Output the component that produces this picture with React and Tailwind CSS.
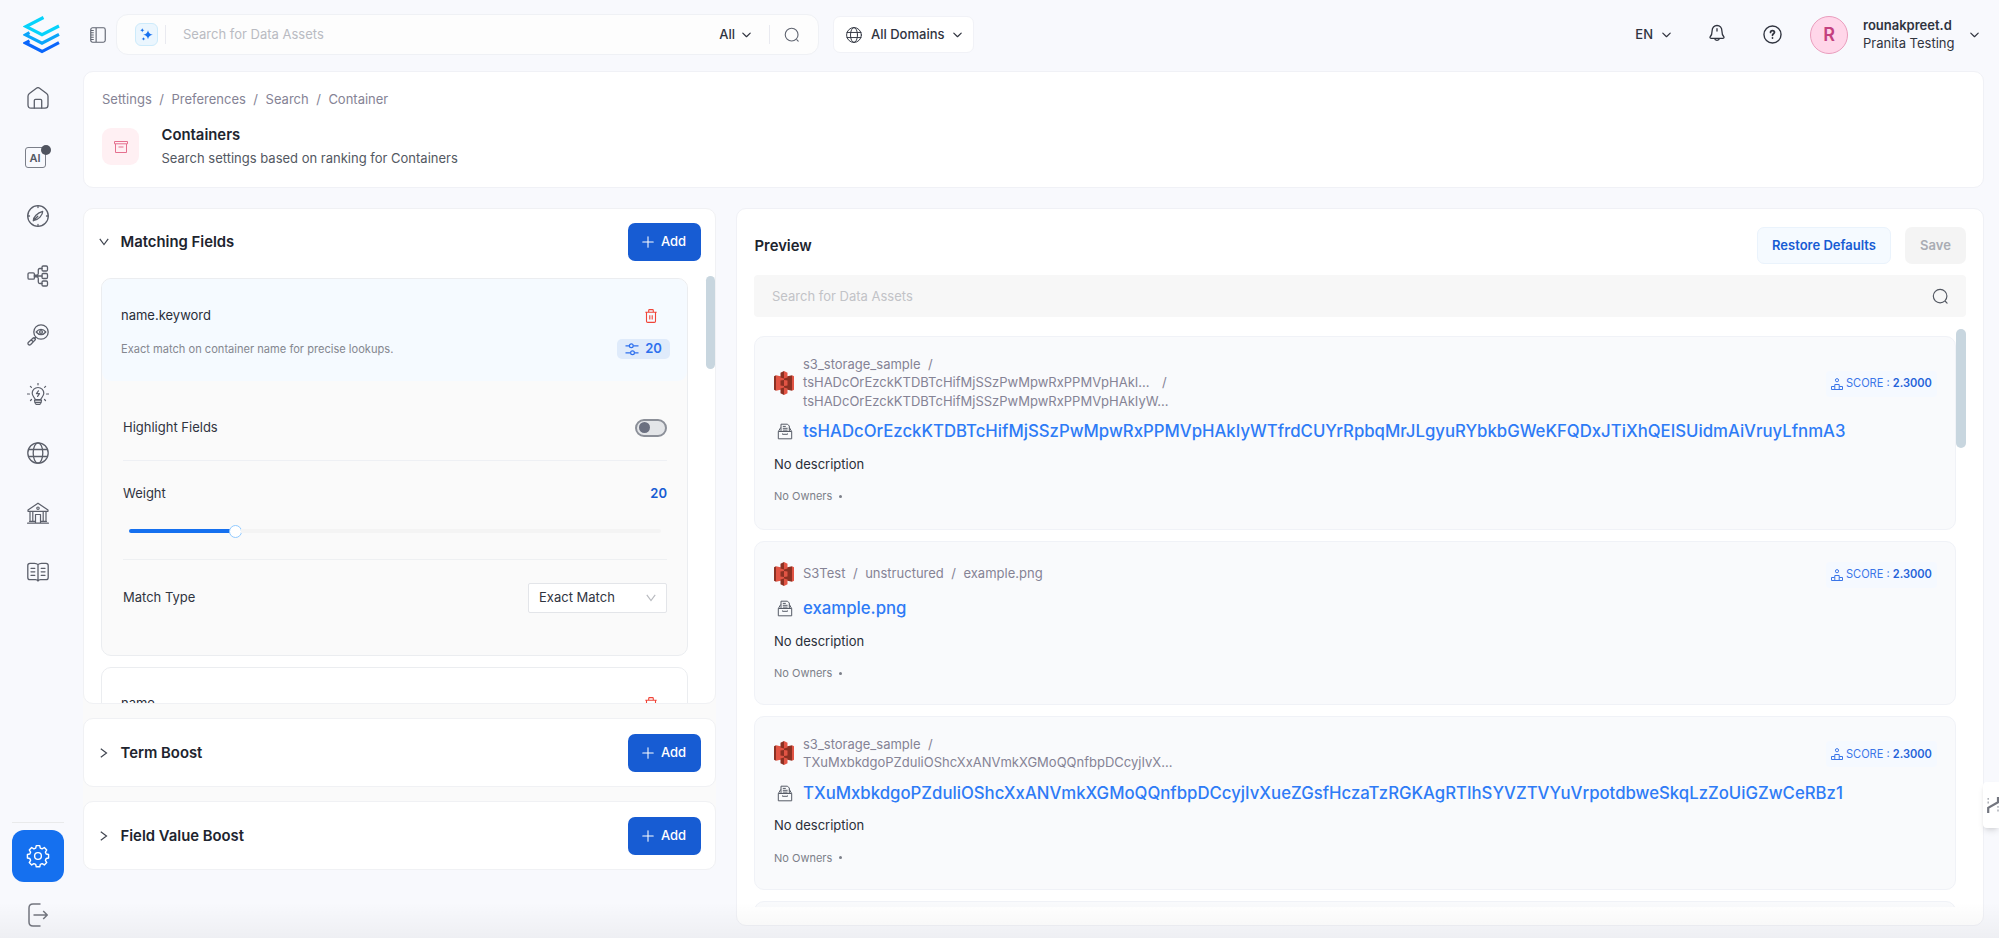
import { Plus } from "lucide-react";

const LONG_A =
  "tsHADcOrEzckKTDBTcHifMjSSzPwMpwRxPPMVpHAkIyWTfrdCUYrRpbqMrJLgyuRYbkbGWeKFQDxJTiXhQEISUidmAiVruyLfnmA3";
const LONG_B =
  "TXuMxbkdgoPZduliOShcXxANVmkXGMoQQnfbpDCcyjIvXueZGsfHczaTzRGKAgRTIhSYVZTVYuVrpotdbweSkqLzZoUiGZwCeRBz1";

const results = [
  {
    path: [
      ["s3_storage_sample", "/"],
      ["tsHADcOrEzckKTDBTcHifMjSSzPwMpwRxPPMVpHAkI...", "/"],
      ["tsHADcOrEzckKTDBTcHifMjSSzPwMpwRxPPMVpHAkIyW..."],
    ],
    name: LONG_A,
    height: "h-[194px]",
  },
  {
    path: [["S3Test", "/", "unstructured", "/", "example.png"]],
    name: "example.png",
    height: "h-[164px]",
  },
  {
    path: [
      ["s3_storage_sample", "/"],
      ["TXuMxbkdgoPZduliOShcXxANVmkXGMoQQnfbpDCcyjIvX..."],
    ],
    name: LONG_B,
    height: "h-[174px]",
  },
];

function Icon({ size = 22, className = "", width = 1.3, children }) {
  return (
    <svg
      width={size}
      height={size}
      viewBox="0 0 22 22"
      fill="none"
      stroke="currentColor"
      strokeWidth={width}
      strokeLinecap="round"
      strokeLinejoin="round"
      className={`shrink-0 ${className}`}
    >
      {children}
    </svg>
  );
}

// rounded chevron used by the top bar menus
function MenuChevron({ className = "" }) {
  return (
    <svg
      width="9"
      height="6"
      viewBox="0 0 9 6"
      fill="none"
      stroke="currentColor"
      strokeWidth="1.2"
      strokeLinecap="round"
      strokeLinejoin="round"
      className={`shrink-0 ${className}`}
    >
      <path d="M.8 1.100 4.500 4.700 8.200 1.100" />
    </svg>
  );
}

// steeper chevron used by collapse headers and the select
function Caret({ className = "" }) {
  return (
    <svg width="10" height="8" viewBox="0 0 10 8" fill="none" stroke="currentColor" strokeWidth="1.2" className={`shrink-0 ${className}`}>
      <path d="m.8.8 4.200 5.700L9.200.8" />
    </svg>
  );
}

function Logo() {
  return (
    <svg width="38" height="38" viewBox="0 0 38 38" fill="none" strokeWidth="3.1">
      <path d="M20.500 1.500 3 10.500 19 18.700 36 10" stroke="#06d3fb" />
      <path d="M6.500 16.600 2.500 18.800 19 27.200 36 18.400" stroke="#0aa5fa" />
      <path d="M6.500 24.800 2.500 27 19 35.500 36 26.600" stroke="#0a66fb" />
    </svg>
  );
}

function AiIcon() {
  return (
    <span className="relative flex h-[21px] w-[21px] -translate-x-[3px] translate-y-px items-center justify-center rounded-[3px] border border-[#7b7f89] text-[11px] font-semibold text-[#535862]">
      AI
      <span className="absolute -top-[3px] -right-[6px] h-[10px] w-[10px] rounded-full bg-[#50545f]" />
    </span>
  );
}

function GlobeIcon({ size, className }) {
  return (
    <Icon size={size} className={className}>
      <circle cx="11" cy="11" r="10.200" />
      <ellipse cx="11" cy="11" rx="4.800" ry="10.200" />
      <path d="M1.500 7.500h19M1.500 14.500h19" />
    </Icon>
  );
}

const navIcons = [
  <Icon key="home">
    <path d="M1 9.200C1 8 1.400 7.300 2.400 6.500L9.400 1.200c1-.7 2.200-.7 3.200 0l7 5.300C20.600 7.300 21 8 21 9.200V18c0 2-1 3.200-3 3.200H4c-2 0-3-1.200-3-3.200Z" />
    <path d="M7.300 21v-7.500c0-.8.4-1.200 1.200-1.200h5c.8 0 1.200.4 1.200 1.200V21" />
  </Icon>,
  <AiIcon key="ai" />,
  <Icon key="explore">
    <circle cx="11" cy="11" r="10.300" />
    <path d="M11 1v1.500M11 19.500V21M1 11h1.500M19.500 11H21M6.300 15.700c0-3.400 4-8 9.400-9.400 0 3.900-4 8.500-9.400 9.400ZM6.300 15.700l4.500-4.500" />
  </Icon>,
  <Icon key="lineage" width={1.300}>
    <rect x="1" y="7.800" width="6.400" height="6.400" rx="1.200" />
    <rect x="15" y="1" width="5.500" height="5" rx="1.200" />
    <rect x="15" y="8.500" width="5.500" height="5" rx="1.200" />
    <rect x="15" y="16" width="5.500" height="5" rx="1.200" />
    <path d="M7.400 11H15M7.400 10.200h2.100c1.300 0 1.800-.6 1.800-1.800V5c0-1 .5-1.500 1.500-1.500H15M7.400 11.800h2.100c1.300 0 1.800.6 1.800 1.800V17c0 1 .5 1.500 1.500 1.500H15" />
  </Icon>,
  <Icon key="observe" width={1.300}>
    <circle cx="14" cy="8" r="7.200" />
    <path d="M9.200 8c2.800-3.500 6.800-3.500 9.600 0-2.800 3.500-6.800 3.500-9.600 0ZM8.700 13.200l-1.600 1.600" />
    <circle cx="14" cy="8" r="1.400" />
    <path d="m1.500 18.200 4.700-4.300c.8-.7 2.800 1.200 2 2l-4.500 4.600c-1.600 1.500-3.800-.8-2.200-2.300ZM4.200 15.800l2 2" />
  </Icon>,
  <Icon key="insights" width={1.200}>
    <path d="M8.200 16.500c0-1.500-3-3-3-6.200a5.800 5.800 0 0 1 11.600 0c0 3.200-3 4.700-3 6.200ZM7.500 17.200h7M8 19.300h6M9 21.300h4M7.500 17.200c0 2 .5 3.500 1.700 4.100M14.500 17.200c0 2-.5 3.500-1.700 4.100" />
    <path d="m11.400 7.800-1.900 2.800h3l-1.900 2.800M11 .3v1.500M3.400 3.300l1 1M18.600 3.300l-1 1M.5 11h2M19.500 11h2M3.500 17.500l1-1M18.500 17.500l-1-1" />
  </Icon>,
  <GlobeIcon key="domains" size={22} />,
  <Icon key="govern" width={1.200}>
    <path d="M1 8 11 1.200 21 8v1.300H1ZM.6 21.200h20.800M2.500 19.300h5.500M14 19.300h5.500M3 9.500v9.600M5.800 9.500v9.600M16.200 9.500v9.600M19 9.500v9.600M8.500 21v-8.500h5V21" />
    <circle cx="11" cy="6.200" r="1.200" />
  </Icon>,
  <Icon key="glossary">
    <path d="M11 3.600C10 2.500 9 2.300 7.500 2.300H3C1.600 2.300.8 3 .8 4.500v12c0 1.500.8 2.200 2.200 2.200h5.500c1.300 0 2 .4 2.500 1.300.5-.9 1.200-1.300 2.500-1.300H19c1.400 0 2.200-.7 2.200-2.200v-12c0-1.500-.8-2.200-2.200-2.200h-4.500c-1.500 0-2.500.2-3.500 1.300ZM11 3.600V20M4 7.300h3.800M4 10.800h3.800M4 14.300h3.800M14.200 7.300H18M14.200 10.800H18M14.200 14.300H18" />
  </Icon>,
];

function SearchIcon({ size = 16, className }) {
  return (
    <Icon size={size} width={1.500} className={className}>
      <circle cx="10.500" cy="10.500" r="8.800" />
      <path d="m17.500 17.500 2 2" />
    </Icon>
  );
}

function TrashIcon() {
  return (
    <svg width="12" height="14" viewBox="0 0 12 14" fill="none" stroke="#f04438" strokeWidth="1.100">
      <path d="M.3 3.300h11.400M3.700 3V1.400c0-.5.300-.8.800-.8h3c.5 0 .8.300.8.800V3M1.500 3.500v8.700c0 .8.400 1.200 1.200 1.200h6.600c.8 0 1.200-.4 1.200-1.200V3.500M4.800 6.200v4.400M7.200 6.200v4.400" />
    </svg>
  );
}

function S3Icon() {
  return (
    <svg width="20" height="24" viewBox="0 0 20 24" className="shrink-0">
      <path d="M0 5.200 2 4.200v15.600l-2-1Z" fill="#8c3123" />
      <path d="M2 4.200 10 6v12l-8 1.800Z" fill="#e25444" />
      <path d="M20 5.200 18 4.200v15.600l2-1Z" fill="#e25444" />
      <path d="M18 4.200 10 6v12l8 1.800Z" fill="#8c3123" />
      <path d="M10 0 6.500 1.800v4.600L10 7.500Z" fill="#8c3123" />
      <path d="m10 0 3.500 1.800v4.600L10 7.500Z" fill="#e25444" />
      <path d="m10 24-3.500-1.800v-4.600L10 16.500Z" fill="#8c3123" />
      <path d="m10 24 3.500-1.800v-4.600L10 16.500Z" fill="#e25444" />
      <path d="m10 9-3.500.5v5L10 15Z" fill="#8c3123" />
      <path d="m10 9 3.500.5v5L10 15Z" fill="#e25444" />
    </svg>
  );
}

function ContainerIcon() {
  return (
    <svg width="16" height="17" viewBox="0 0 16 17" fill="none" stroke="#565b66" strokeWidth="1" className="shrink-0">
      <path d="M4 8V1.200h6.500l1.800 1.800V8M5.800 3.400h3M5.800 5.300h4.800M5.800 7.100h4.800" />
      <path d="M1.300 8.500h13.400v7.300H1.300ZM5.500 10.500v.8h5v-.8M3.700 4.500 1.500 8.300M12.400 4.500l2.100 3.800" />
    </svg>
  );
}

function SlidersIcon() {
  return (
    <svg width="14" height="13" viewBox="0 0 14 13" fill="none" stroke="#2e70ee" strokeWidth="1.200">
      <path d="M.5 2.800h4M8.300 2.800h5.200M.5 9.800h4.500M9.600 9.800h3.900" />
      <circle cx="6.300" cy="2.800" r="1.900" />
      <circle cx="7.500" cy="9.800" r="1.900" />
    </svg>
  );
}

function ScoreIcon() {
  return (
    <svg width="12" height="12" viewBox="0 0 12 12" fill="none" stroke="#3b76e8" strokeWidth="1">
      <circle cx="6" cy="2.200" r="1.600" />
      <path d="M.5 11.500V8.500h3.300V6.500h4.400v2h3.300v3ZM3.800 8.500v3M8.200 8.500v3" />
    </svg>
  );
}

function AddButton() {
  return (
    <button className="flex h-[38px] w-[73px] items-center justify-center gap-[4px] rounded-[7px] bg-[#175cd3] pr-[4px] text-[13px] font-medium text-white">
      <Plus size={18} strokeWidth={1.4} />
      Add
    </button>
  );
}

function Sidebar() {
  return (
    <aside className="flex w-[76px] shrink-0 flex-col items-center pt-[16px]">
      <div className="w-[38px] translate-x-[4px]">
        <Logo />
      </div>
      <nav className="mt-[14px] flex flex-col text-[#5b5f6a]">
        {navIcons.map((icon) => (
          <div key={icon.key} className="flex h-[59.300px] w-[52px] items-center justify-center">
            {icon}
          </div>
        ))}
      </nav>
      <div className="mt-auto w-[52px] border-t border-[#e9eaeb] pt-[7px]">
        <div className="flex h-[52px] items-center justify-center rounded-[12px] bg-[#1570ef] text-white">
          <Icon size={24}>
            <path d="M9.400 1.500h3.200l.5 2.300 1.700.7 2-1.300 2.200 2.300-1.200 2 .7 1.700 2.200.4v3.200l-2.200.5-.7 1.700 1.200 2-2.200 2.200-2-1.200-1.700.7-.5 2.200H9.400l-.5-2.200-1.700-.7-2 1.200L3 17l1.200-2-.7-1.700-2.200-.5V9.600l2.200-.4.700-1.700-1.200-2 2.200-2.300 2 1.300 1.700-.7Z" />
            <circle cx="11" cy="11" r="3.100" />
          </Icon>
        </div>
        <div className="flex h-[56px] items-start justify-center pt-[21px] text-[#73767f]">
          <svg width="20" height="24" viewBox="0 0 20 24" fill="none" stroke="currentColor" strokeWidth="1.500">
            <path d="M12.500 1H5C2.500 1 1 2.500 1 5v14c0 2.500 1.500 4 4 4h7.500M5.500 12H19M15.200 8l4 4-4 4" />
          </svg>
        </div>
      </div>
    </aside>
  );
}

function Header() {
  return (
    <header className="flex h-[69px] shrink-0 items-center pl-[7px] text-[#30343f]">
      <svg width="16" height="16" viewBox="0 0 17 17" fill="none" stroke="#5f6470" strokeWidth="1.200">
        <rect x=".8" y=".8" width="15.400" height="15.400" rx="2" />
        <path d="M6.500 1v15M1 3.700h3M1 6.100h3M1 8.500h3M1 10.900h3M1 13.300h3" />
      </svg>
      <div className="ml-[10px] flex h-[41px] w-[703px] items-center rounded-[12px] border border-[#eff1f5] bg-[#fdfdfd]">
        <div className="ml-[18px] flex h-[23px] w-[23px] items-center justify-center rounded-[6px] border border-[#cdebfb] bg-[#ebf6fe]">
          <svg width="13" height="13" viewBox="0 0 13 13" fill="#1570ef">
            <path d="M8 2.200c.6 2.900 1.700 3.900 4.800 4.500C9.700 7.300 8.600 8.400 8 11.300c-.6-2.900-1.700-4-4.800-4.600C6.300 6.100 7.400 5.100 8 2.200Z" />
            <path d="M2.300 0c.3 1.400.8 1.900 2.200 2.200C3.100 2.500 2.600 3 2.300 4.400 2 3 1.500 2.500.1 2.200 1.500 1.900 2 1.400 2.300 0ZM3.500 9c.2 1.200.7 1.700 2 1.900-1.300.2-1.800.7-2 1.900-.2-1.200-.7-1.700-2-1.900 1.300-.2 1.800-.7 2-1.900Z" />
          </svg>
        </div>
        <span className="ml-[7px] h-[19px] w-px bg-[#e9eaf0]" />
        <span className="ml-[17px] text-[13px] text-[#b9bbc2]">Search for Data Assets</span>
        <span className="ml-auto text-[13px] font-medium">All</span>
        <MenuChevron className="ml-[7px]" />
        <span className="ml-[18px] h-[19px] w-px bg-[#e9eaf0]" />
        <SearchIcon size={16} className="mr-[18px] ml-[14px] text-[#5f6470]" />
      </div>
      <div className="ml-[14px] flex h-[37px] w-[141px] items-center rounded-[7px] border border-[#f1f2f7] bg-white pl-[12px]">
        <GlobeIcon size={16} />
        <span className="ml-[9px] text-[13px] font-medium">All Domains</span>
        <MenuChevron className="ml-[8px]" />
      </div>
      <div className="ml-auto flex items-center pr-[20px]">
        <span className="text-[13px] font-medium">EN</span>
        <MenuChevron className="ml-[9px]" />
        <Icon size={18} width={1.600} className="ml-[37px] -translate-y-[2px]">
          <path d="M5 8.500C5 4.500 7.500 1.800 11 1.800s6 2.700 6 6.700c0 3.800 1 5.600 2.300 7 .8 1-.2 2-1.300 2H4c-1.100 0-2.100-1-1.300-2C4 14.100 5 12.300 5 8.500ZM11 5.800v2.800M8 17.700c.6 3 5.400 3 6 0" />
        </Icon>
        <Icon size={19} width={1.600} className="ml-[37px]">
          <circle cx="11" cy="11" r="9.900" />
          <path d="M8.700 8.600c0-1.300 1-2.200 2.300-2.200s2.300.8 2.300 2.100c0 1.600-2.300 1.700-2.300 3.400M11 14.900v.2" strokeWidth="2" />
        </Icon>
        <span className="ml-[28px] flex h-[38px] w-[38px] items-center justify-center rounded-full border border-[#ea9dbd] bg-[#ffd6e9] text-[18px] font-semibold text-[#c4417f]">
          R
        </span>
        <div className="ml-[15px] w-[107px] -translate-y-px text-[13px] leading-[18px]">
          <p className="font-semibold">rounakpreet.d</p>
          <p>Pranita Testing</p>
        </div>
        <MenuChevron />
      </div>
    </header>
  );
}

function PageHeading() {
  return (
    <section className="h-[117px] rounded-[10px] border border-[#f0f1f6] bg-white pt-[17px] pl-[18px]">
      <div className="flex gap-[7.500px] text-[13px] leading-[20px] text-[#858395]">
        <span>Settings</span>
        <span>/</span>
        <span>Preferences</span>
        <span>/</span>
        <span>Search</span>
        <span>/</span>
        <span>Container</span>
      </div>
      <div className="mt-[16px] flex">
        <div className="mt-[3px] flex h-[37px] w-[37px] items-center justify-center rounded-[9px] bg-[#fff0f3]">
          <svg width="14" height="12" viewBox="0 0 14 12" fill="none" stroke="#e5708f" strokeWidth="1">
            <path d="M.5.5h13v2.300H.5ZM1.500 3v8.500h11V3M4.500 6h5" />
          </svg>
        </div>
        <div className="ml-[22.500px]">
          <h1 className="text-[14.850px] leading-[20px] font-semibold text-[#20242e]">Containers</h1>
          <p className="mt-[3px] text-[13px] leading-[20px] text-[#535862]">
            Search settings based on ranking for Containers
          </p>
        </div>
      </div>
    </section>
  );
}

function MatchingFields() {
  return (
    <section className="flex h-[496px] shrink-0 flex-col overflow-hidden rounded-[10px] border border-[#f0f1f4] bg-white">
      <div className="flex h-[66px] shrink-0 items-center pr-[14px] pl-[15px]">
        <Caret className="text-[#414651]" />
        <h2 className="mr-auto ml-[11.500px] text-[14.850px] font-semibold text-[#20242e]">Matching Fields</h2>
        <AddButton />
      </div>
      <div className="flex min-h-0 flex-1 items-start justify-between pl-[17px]">
        <div className="w-[587px] pt-[3px]">
          <div className="h-[378px] rounded-[10px] border border-[#ebedf0] bg-[#fafafa]">
            <div className="h-[102px] rounded-[9px] bg-[#f5faff] pt-[25px] pr-[17px] pl-[19px]">
              <div className="flex h-[24px] items-center justify-between pr-[13px]">
                <span className="text-[13px] text-[#292e39]">name.keyword</span>
                <TrashIcon />
              </div>
              <div className="mt-[10px] flex h-[22px] items-center justify-between">
                <span className="text-[11.100px] text-[#84878f]">Exact match on container name for precise lookups.</span>
                <span className="flex h-[20px] w-[53px] items-center justify-center gap-[6px] rounded-[5px] bg-[#dfebfb] text-[13px] font-semibold text-[#2e70ee]">
                  <SlidersIcon />
                  20
                </span>
              </div>
            </div>
            <div className="pr-[20px] pl-[21px] text-[13px] text-[#30343f]">
              <div className="flex h-[80px] items-center justify-between border-b border-[#eef0f4] pt-[14px]">
                <span>Highlight Fields</span>
                <span className="flex h-[18px] w-[32px] items-center rounded-full border-2 border-[#8b8f98] bg-[#e3e5e8] pl-[2px]">
                  <span className="h-[11px] w-[11px] rounded-full bg-[#6b7080]" />
                </span>
              </div>
              <div className="h-[99px] border-b border-[#eef0f2] pt-[22.500px]">
                <div className="flex h-[20px] items-center justify-between">
                  <span>Weight</span>
                  <span className="font-semibold text-[#175cd3]">20</span>
                </div>
                <div className="mt-[20.500px] flex h-[14px] items-center px-[6px]">
                  <span className="h-[4px] w-[101px] rounded-l-full bg-[#1570ef]" />
                  <span className="-mx-[1px] h-[13px] w-[13px] rounded-full border-[1.500px] border-[#91caff] bg-white" />
                  <span className="h-[4px] flex-1 rounded-r-full bg-[#f4f4f4]" />
                </div>
              </div>
              <div className="flex h-[75px] items-center justify-between">
                <span>Match Type</span>
                <span className="flex h-[30px] w-[139px] items-center justify-between rounded-[2px] border border-[#e3e5e9] bg-white pr-[10px] pl-[10px]">
                  Exact Match
                  <Caret className="text-[#b9bbc0]" />
                </span>
              </div>
            </div>
          </div>
          <div className="mt-[11px] h-[100px] rounded-[10px] border border-[#ebedf0] bg-white pt-[24px] pr-[30px] pl-[19px]">
            <div className="flex h-[24px] items-center justify-between">
              <span className="text-[13px] text-[#292e39]">name</span>
              <TrashIcon />
            </div>
          </div>
        </div>
        <div className="mt-px h-[93px] w-[9px] rounded-full bg-[#c8d6df]" />
      </div>
    </section>
  );
}

function BoostPanel({ title }) {
  return (
    <section className="flex h-[69px] shrink-0 items-center rounded-[10px] border border-[#f0f1f4] bg-white pr-[14px] pl-[15px]">
      <Caret className="-rotate-90 text-[#414651]" />
      <h2 className="mr-auto ml-[11.500px] pt-[2px] text-[14.850px] font-semibold text-[#20242e]">{title}</h2>
      <AddButton />
    </section>
  );
}

function ResultCard({ result }) {
  return (
    <article className={`${result.height} shrink-0 rounded-[10px] border border-[#f0f2f7] bg-[#f9fafc] pt-[17px] pr-[18px] pl-[19px]`}>
      <div className="flex min-h-[29px] items-center">
        <S3Icon />
        <div className="ml-[9px] pt-[1px] pb-[1px] text-[13px] leading-[18.400px] text-[#858395]">
          {result.path.map((line, i) => (
            <div key={i} className="flex min-h-[18.400px] gap-[7.500px]">
              {line.map((part, j) => (
                <span key={j} className={part === "/" && i === 1 ? "ml-[5px]" : ""}>
                  {part}
                </span>
              ))}
            </div>
          ))}
        </div>
        <div className="-my-[4px] ml-auto flex h-[26px] w-[111px] translate-y-px items-center rounded-[4px] bg-[#f5f9ff] pl-[5px] text-[11.050px] text-[#3b76e8]">
          <ScoreIcon />
          <span className="ml-[3px]">
            SCORE : <b className="font-semibold text-[#2563d9]">2.3000</b>
          </span>
        </div>
      </div>
      <div className="mt-[7.500px] flex h-[26px] items-center pl-[3px]">
        <ContainerIcon />
        <span className="ml-[10px] text-[16.760px] font-medium whitespace-nowrap text-[#2e7bf6]">{result.name}</span>
      </div>
      <p className="mt-[9px] text-[13px] leading-[20px] text-[#292e39]">No description</p>
      <p className="mt-[12.500px] flex items-center gap-[7px] text-[11px] leading-[20px] text-[#7c7f89]">
        No Owners
        <span className="h-[3px] w-[3px] rounded-full bg-[#7c7f89]" />
      </p>
    </article>
  );
}

function Preview() {
  return (
    <section className="flex h-[718px] w-[1248px] flex-col rounded-[10px] border border-[#f0f1f6] bg-white px-[17px] pt-[18px] pb-[18px]">
      <div className="flex h-[37px] shrink-0 items-center">
        <h2 className="mr-auto ml-[0.500px] pt-[2px] text-[14.850px] font-semibold text-[#20242e]">Preview</h2>
        <button className="h-[37px] w-[134px] rounded-[7px] border border-[#eaf3fc] bg-[#f5faff] text-[13px] font-semibold text-[#175cd3]">
          Restore Defaults
        </button>
        <button className="ml-[14px] h-[37px] w-[61px] rounded-[7px] bg-[#f4f4f4] text-[13px] font-semibold text-[#a9acb3]">
          Save
        </button>
      </div>
      <div className="mt-[11px] flex h-[42px] shrink-0 items-center justify-between rounded-[4px] bg-[#f7f7f7] pr-[17px] pl-[18px] text-[13px] text-[#c2c3c7]">
        <span className="pt-px">Search for Data Assets</span>
        <SearchIcon size={17} className="text-[#535862]" />
      </div>
      <div className="mt-[12px] flex min-h-0 flex-1">
        <div className="flex w-[1202px] flex-col gap-[11px] overflow-hidden pt-[7px]">
          {results.map((result) => (
            <ResultCard key={result.name} result={result} />
          ))}
          <div className="h-[100px] shrink-0 rounded-[10px] border border-[#f0f2f7] bg-[#f9fafc]" />
        </div>
        <div className="h-[119px] w-[10px] shrink-0 rounded-full bg-[#c8d6df]" />
      </div>
    </section>
  );
}

export default function App() {
  return (
    <div className="relative flex h-[938px] w-[1999px] overflow-hidden bg-[#f8f9fd] font-['Inter',sans-serif]">
      <Sidebar />
      <div className="flex flex-1 flex-col pl-[7px]">
        <Header />
        <main className="mt-[2px] w-[1901px]">
          <PageHeading />
          <div className="mt-[20px] flex items-start justify-between">
            <div className="flex w-[633px] flex-col gap-[14px] rounded-[10px] bg-[#fafafa]">
              <MatchingFields />
              <BoostPanel title="Term Boost" />
              <BoostPanel title="Field Value Boost" />
            </div>
            <Preview />
          </div>
        </main>
      </div>
      <div className="absolute top-[782px] right-0 flex h-[46px] w-[16px] items-center rounded-l-[4px] bg-white pl-[4px] shadow-md">
        <svg width="12" height="16" viewBox="0 0 12 16" fill="none" className="shrink-0">
          <path d="M1.200 16v-5.200L11 5.200V0" stroke="#73767f" strokeWidth="2.200" />
          <path d="M1.200 1v7M11 9v7" stroke="#a6a9b0" strokeWidth="1.400" strokeDasharray="1.800 1.800" />
        </svg>
      </div>
      <div className="pointer-events-none absolute inset-x-0 bottom-0 h-[36px] bg-linear-to-b from-transparent to-black/4" />
    </div>
  );
}
